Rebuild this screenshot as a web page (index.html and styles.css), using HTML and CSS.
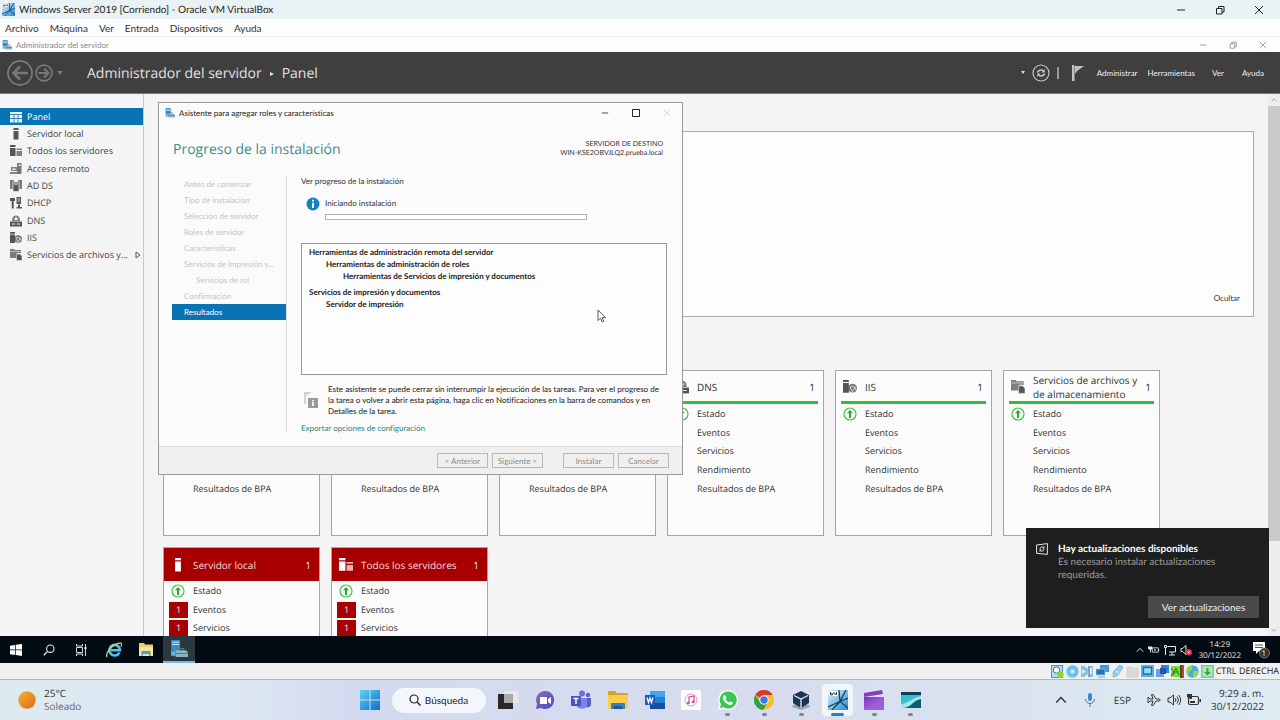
FILE: index.html
```html
<!DOCTYPE html>
<html lang="es">
<head>
<meta charset="utf-8">
<meta name="viewport" content="width=device-width, initial-scale=1">
<title>Windows Server 2019 [Corriendo] - Oracle VM VirtualBox</title>
<link rel="stylesheet" href="styles.css">
</head>
<body>
<svg class="defs" aria-hidden="true">
  <defs>
    <linearGradient id="g-win" x1="0" y1="0" x2="1" y2="1"><stop offset="0" stop-color="#5fd0f2"/><stop offset="1" stop-color="#0a6fd0"/></linearGradient>
    <linearGradient id="g-sun" x1="0" y1="0" x2="1" y2="1"><stop offset="0" stop-color="#f3b52c"/><stop offset="1" stop-color="#e2661c"/></linearGradient>
    <linearGradient id="g-chat" x1="0" y1="0" x2="1" y2="1"><stop offset="0" stop-color="#8a6bb5"/><stop offset="1" stop-color="#5046c8"/></linearGradient>
    <linearGradient id="g-clip" x1="0" y1="0" x2="1" y2="1"><stop offset="0" stop-color="#7a35b5"/><stop offset="1" stop-color="#c07af5"/></linearGradient>
    <linearGradient id="g-vm" x1="0" y1="0" x2="1" y2="1"><stop offset="0" stop-color="#e4f4fb"/><stop offset="1" stop-color="#1f8bdc"/></linearGradient>
  </defs>
  <symbol id="i-vm" viewBox="0 0 20 20"><rect width="20" height="20" fill="url(#g-vm)"/><path d="M0 17L12 11.500 20 8M4 20L12 11.500 18 0M11 0l1 11.500L20 18" stroke="#1d3f55" stroke-width="1.300" fill="none"/><rect x="1" y="1" width="9" height="5" fill="#fff"/><path d="M2.500 2v3h2V3.500h-2M6 2v2h2.500M8.500 2v3" stroke="#222" stroke-width=".8" fill="none"/></symbol>
  <symbol id="i-srvmgr" viewBox="0 0 16 16"><path d="M1 0h8v10H1z" fill="#2f8fc4"/><path d="M2 2h6M2 4h6" stroke="#d8f0fb"/><path d="M1 10h4v4H1z" fill="#65b5dc"/><path d="M5 9h9l2 2v4H5z" fill="#8fb3c6"/><path d="M7 9V7.500h5V9M5 12h11" stroke="#4b7890" fill="none"/></symbol>
  <symbol id="i-min" viewBox="0 0 10 10"><path d="M1 5h8" stroke="currentColor"/></symbol>
  <symbol id="i-max" viewBox="0 0 10 10"><path d="M1.500 1.500h7v7h-7z" fill="none" stroke="currentColor"/></symbol>
  <symbol id="i-restore" viewBox="0 0 10 10"><path d="M1.500 3.500h5.500v5.500H1.500zM3.500 3.500V1.500h5.500v5.500H7" fill="none" stroke="currentColor" stroke-linejoin="round"/></symbol>
  <symbol id="i-close" viewBox="0 0 10 10"><path d="M1 1l8 8M9 1L1 9" stroke="currentColor"/></symbol>
  <symbol id="i-up" viewBox="0 0 10 10"><path d="M1 7l4-4 4 4" fill="none" stroke="currentColor" stroke-width="1.200"/></symbol>
  <symbol id="i-down" viewBox="0 0 10 10"><path d="M1 3l4 4 4-4" fill="none" stroke="currentColor" stroke-width="1.200"/></symbol>
  <symbol id="i-left" viewBox="0 0 26 26"><circle cx="13" cy="13" r="12" fill="none" stroke="currentColor" stroke-width="1.800"/><path d="M21 13H7M13 6.500L6.500 13l6.500 6.500" fill="none" stroke="currentColor" stroke-width="2.600"/></symbol>
  <symbol id="i-right" viewBox="0 0 26 26"><circle cx="13" cy="13" r="11.500" fill="none" stroke="currentColor" stroke-width="2.500"/><path d="M5 13h14M13 6.500l6.500 6.500-6.500 6.500" fill="none" stroke="currentColor" stroke-width="3.200"/></symbol>
  <symbol id="i-refresh" viewBox="0 0 18 18"><circle cx="9" cy="9" r="8" fill="none" stroke="currentColor" stroke-width="1.200"/><path d="M5.500 8.500a3.500 3 0 0 1 6-1.500M12.500 9.500a3.500 3 0 0 1-6 1.500" fill="none" stroke="currentColor" stroke-width="1.600"/><path d="M12.800 5v3.500H9.500zM5.200 13V9.500h3.300z" fill="currentColor"/></symbol>
  <symbol id="i-flag" viewBox="0 0 12 16"><path d="M0 0h2.500v16H0zM3 1h9L5 6l-2 3z" fill="currentColor"/></symbol>
  <symbol id="i-panel" viewBox="0 0 12 12"><path d="M0 1h12v10.500H0z" fill="#e9f6fd"/><path d="M0 3.500h12M4 3.500v8M8 3.500v8M0 7.500h12" stroke="#0a73b4" stroke-width=".8"/></symbol>
  <symbol id="i-server" viewBox="0 0 12 12"><path d="M3.500 0h5v2h-5zM3.500 3h5v8.500h-5z" fill="currentColor"/></symbol>
  <symbol id="i-servers" viewBox="0 0 12 12"><path d="M0 0h5.500v2H0zM0 3h5.500v8H0z" fill="currentColor"/><path d="M6.500 3.500H12V5H6.500zM6.500 6H12v5H6.500z" fill="currentColor" opacity=".72"/></symbol>
  <symbol id="i-remote" viewBox="0 0 12 12"><path d="M7 0h4.500v11H7z" fill="currentColor" opacity=".8"/><path d="M1 4h6v4H1zM0 9h7v2H0z" fill="currentColor" opacity=".7"/><path d="M2.500 5.500h3v1.500h-3zM8.500 1.500h2v1.500h-2z" fill="#f4f4f4"/></symbol>
  <symbol id="i-adds" viewBox="0 0 12 12"><path d="M0 0h4v9H0zM8 0h4v9H8z" fill="currentColor" opacity=".75"/><path d="M3 2h6v9.500H3z" fill="currentColor" stroke="#f4f4f4" stroke-width=".7"/><path d="M4 4h4" stroke="#f4f4f4"/></symbol>
  <symbol id="i-dhcp" viewBox="0 0 12 12"><path d="M0 1h5v3H3.700v7.500H1.700V4H0zM6.500 0H11v7H6.500zM8 7.500h2V10h2v1.500H6.500V10H8z" fill="currentColor"/><path d="M7.500 2h2.500M7.500 4h2.500" stroke="#f4f4f4" stroke-width=".8"/></symbol>
  <symbol id="i-dns" viewBox="0 0 12 12"><path d="M2 5a4 4.500 0 1 1 8 0v1H2z" fill="currentColor" opacity=".75"/><circle cx="6" cy="3.700" r="1.500" fill="#f4f4f4"/><path d="M0 6.500h12v5H0z" fill="currentColor"/><path d="M2 9h3M7 9h3" stroke="#f4f4f4"/></symbol>
  <symbol id="i-iis" viewBox="0 0 12 12"><path d="M0 0h5v1.800H0zM0 2.500h5V11H0z" fill="currentColor"/><circle cx="8.200" cy="7" r="3.800" fill="currentColor" opacity=".8"/><path d="M6 6l2-1 2 2-2 3-1-2zM10 5.500l1 3" stroke="#f4f4f4" stroke-width=".7" fill="none"/></symbol>
  <symbol id="i-files" viewBox="0 0 12 12"><path d="M0 0h4l1 1h6v3H7v5H0z" fill="currentColor" opacity=".75"/><path d="M0 2.500h11" stroke="#f4f4f4" stroke-width=".5"/><path d="M6.500 5h3.500l2 2v4.500H6.500z" fill="currentColor" stroke="#f4f4f4" stroke-width=".5"/></symbol>
  <symbol id="i-ok" viewBox="0 0 14 14"><circle cx="7" cy="7" r="6" fill="none" stroke="#3fc53f" stroke-width="1.200"/><path d="M7 3l3 3.300H8V11H6V6.300H4z" fill="#2fa82f"/></symbol>
  <symbol id="i-info" viewBox="0 0 14 14"><circle cx="7" cy="7" r="6.500" fill="#1580c2"/><path d="M6 5.700h2V11H6zM6 2.800h2v1.800H6z" fill="#fff"/></symbol>
  <symbol id="i-task" viewBox="0 0 16 18"><path d="M1 1h8L3 5v8H1z" fill="#d2d2d2"/><path d="M5 7h10v10H5z" fill="#9a9a9a"/><path d="M9 11h2v4H9zM9 9h2v1.200H9z" fill="#f2f2f2"/></symbol>
  <symbol id="i-cursor" viewBox="0 0 9 14"><path d="M1 1v10.500L3.500 9.200 5.200 13l1.600-.7L5.200 8.700H8.500z" fill="#fff" stroke="#444" stroke-width=".9"/></symbol>
  <symbol id="i-update" viewBox="0 0 12 12"><path d="M.6 2L11.400.6v10.800L.6 10.300z" fill="none" stroke="#e5e5e5"/><path d="M4 6a2.200 2.200 0 0 1 3.600-1.700M8 6a2.200 2.200 0 0 1-3.600 1.700" fill="none" stroke="#e5e5e5"/><path d="M8.500 3v2.500H6zM3.500 9V6.500H6z" fill="#e5e5e5"/></symbol>
  <symbol id="i-win10" viewBox="0 0 12 12"><path d="M0 1.700l5.300-.8v4.700H0zM6 .8L12 0v5.600H6zM0 6.300h5.300V11L0 10.300zM6 6.300h6V12l-6-.9z" fill="#fff"/></symbol>
  <symbol id="i-search" viewBox="0 0 12 12"><circle cx="7.300" cy="4.700" r="3.700" fill="none" stroke="currentColor" stroke-width="1.100"/><path d="M4.600 7.400L.8 11.200" stroke="currentColor" stroke-width="1.300"/></symbol>
  <symbol id="i-search2" viewBox="0 0 12 12"><circle cx="5" cy="5" r="4" fill="none" stroke="currentColor" stroke-width="1.200"/><path d="M8 8l3.500 3.500" stroke="currentColor" stroke-width="1.400"/></symbol>
  <symbol id="i-taskview" viewBox="0 0 12 12"><path d="M1.500 3.500h6v5h-6zM1.500 0v2h6V0M1.500 12v-2h6v2M10.500 0v12" fill="none" stroke="#d8d8d8"/><path d="M9.500 3h2v2h-2z" fill="#fff"/></symbol>
  <symbol id="i-ie" viewBox="0 0 16 16"><path d="M13.500 10.500A5.300 5.300 0 1 1 14 8.300H5" fill="none" stroke="#4cc3f0" stroke-width="2.600"/><path d="M1 15C-1 11 7 1 15 1.200c1.500.6.500 2.300 0 3.300" fill="none" stroke="#e6d54b" stroke-width="1.300"/></symbol>
  <symbol id="i-folder10" viewBox="0 0 16 14"><path d="M1 0h5l1 1.500h8V13H1z" fill="#e9cc6e"/><path d="M1 4h14v9H1z" fill="#f8e59a"/><path d="M3.500 8h9v5H11v-2H5v2H3.500z" fill="#3ba7cf"/></symbol>
  <symbol id="i-battery" viewBox="0 0 14 12"><path d="M5 3.500h7v5H5zM12.500 5v2" fill="none" stroke="currentColor"/><path d="M0 2h5v2.500L3.500 6v3h-1V6L0 4.500z" fill="currentColor"/><path d="M7 5h2v2H7z" fill="currentColor"/></symbol>
  <symbol id="i-net" viewBox="0 0 12 12"><path d="M3.500 2.500h8v5.500H5M8 8v3M5 11h6M.5 1.500h2v2h-2zM1.500 4v7" fill="none" stroke="currentColor"/></symbol>
  <symbol id="i-mute" viewBox="0 0 12 12"><path d="M1 4.500h1.500L6 1.500v9L2.500 7.500H1z" fill="none" stroke="currentColor"/><circle cx="8.700" cy="8.300" r="3.200" fill="#d9304a"/><path d="M7.500 7.100l2.400 2.400M9.900 7.100L7.500 9.500" stroke="#fff" stroke-width=".8"/></symbol>
  <symbol id="i-note" viewBox="0 0 18 18"><path d="M1 1h12v9H7l-3 3v-3H1z" fill="#fff"/><path d="M3 4h8M3 6.500h8" stroke="#222" stroke-width=".8"/><circle cx="12.500" cy="12" r="5" fill="#333" stroke="#999" stroke-width=".7"/></symbol>
  <symbol id="i-s1" viewBox="0 0 13 13"><rect x=".5" y=".5" width="11" height="12" fill="#b9dcef" stroke="#4a97cf"/><circle cx="5.500" cy="5" r="3.200" fill="#fff" stroke="#2a70b0"/><circle cx="9.500" cy="9.700" r="3.200" fill="#8bd336"/></symbol>
  <symbol id="i-s2" viewBox="0 0 13 13"><circle cx="6.500" cy="6.500" r="6.200" fill="#6bc2ea"/><circle cx="6.500" cy="6.500" r="3" fill="#a9e2f7" stroke="#4aa6d8" stroke-width=".6"/><circle cx="6.500" cy="6.500" r="1.100" fill="#fff"/></symbol>
  <symbol id="i-s3" viewBox="0 0 13 13"><path d="M0 1h3l4 3V1h5v11H7V9l-4 3H0z" fill="#91bcda"/><path d="M9 3h2v6H9zM1 4l4 2.500L1 9z" fill="#d9eef8"/><path d="M8 1v11" stroke="#7b8d98"/></symbol>
  <symbol id="i-s4" viewBox="0 0 13 13"><path d="M4 0h9v7H4z" fill="#4698d5"/><path d="M0 4h9v6H0z" fill="#2273b8" stroke="#9dd1f0" stroke-width=".7"/><path d="M2 12h7" stroke="#6eacd2"/></symbol>
  <symbol id="i-s5" viewBox="0 0 13 13"><path d="M9 0l3 2-5 8-4 2-2-1 2-5z" fill="#93cdec" stroke="#5a9cc8" stroke-width=".7"/><path d="M5 6l3 2M2 9l-2 4" stroke="#eaf7fd"/></symbol>
  <symbol id="i-s6" viewBox="0 0 13 13"><path d="M1 2h4l1 1h6v9H1z" fill="#dadada" stroke="#c5c5c5" stroke-width=".6"/></symbol>
  <symbol id="i-s7" viewBox="0 0 13 13"><path d="M0 0h13v12H0z" fill="#5db2e8"/><path d="M2.500 2.500h8v6.500h-8z" fill="#8fe2fb" stroke="#1f6db3" stroke-width="1.300"/></symbol>
  <symbol id="i-s8" viewBox="0 0 13 13"><path d="M5 0h8v8H5z" fill="#3a80d4"/><path d="M0 4h8v8H0z" fill="#6aa4e8"/><path d="M4 3h6v6H4z" fill="#2456b0"/></symbol>
  <symbol id="i-s9" viewBox="0 0 13 13"><path d="M0 1h9v11H0z" fill="#7fdb3f"/><path d="M2 10l3-7 3 7M3 7h4M0 3l3 4-3 4" fill="none" stroke="#2c7a18" stroke-width="1"/><path d="M9 0h2v13H9z" fill="#2e5a1c"/><path d="M11 0h2v13h-2z" fill="#c64428"/></symbol>
  <symbol id="i-s10" viewBox="0 0 13 13"><circle cx="6.500" cy="6.500" r="6.200" fill="#49a9e0"/><path d="M1 3c3-4 6-2 5 1s-3 1-3 4-2 1-2 0zM7 6h5c1 3-2 6-4 6s0-3-1-6z" fill="#94dd3a"/></symbol>
  <symbol id="i-s11" viewBox="0 0 13 13"><path d="M0 0h13v13H0z" fill="#63c8da"/><path d="M1.500 1.500h10v10h-10z" fill="#b6eb93"/><path d="M5.500 3h2v4H10l-3.500 3.500L3 7h2.500z" fill="#33a44b"/></symbol>
  <symbol id="i-sun" viewBox="0 0 18 18"><circle cx="9" cy="9" r="8.700" fill="url(#g-sun)"/></symbol>
  <symbol id="i-win11" viewBox="0 0 20 20"><path d="M0 0h9.500v9.500H0zM10.500 0H20v9.500h-9.500zM0 10.500h9.500V20H0zM10.500 10.500H20V20h-9.500z" fill="url(#g-win)"/></symbol>
  <symbol id="i-desk" viewBox="0 0 20 20"><path d="M0 4h15v15H0z" fill="#292929"/><path d="M6 1h14v12H6z" fill="#e8e9e7"/><path d="M6 4h9v9H6z" fill="#aaa"/></symbol>
  <symbol id="i-chat" viewBox="0 0 20 20"><path d="M10 1a9 9 0 1 1-4 17l-5 1 1-5A9 9 0 0 1 10 1z" fill="url(#g-chat)"/><path d="M5 7h7v7H5zM13 9l3-2v7l-3-2z" fill="#fff"/></symbol>
  <symbol id="i-teams" viewBox="0 0 20 20"><circle cx="11" cy="3.500" r="3" fill="#6b6fd6"/><circle cx="17" cy="5" r="2.200" fill="#5b5fc7"/><path d="M14 8h6v6c0 3-3 4-5 3z" fill="#5b5fc7"/><path d="M5 8h11v7c0 5-10 5-11 0z" fill="#7b83eb"/><path d="M0 6h10v10H0z" fill="#4b53bc"/><path d="M2.500 8.500h5M5 8.500v5.500" stroke="#fff" stroke-width="1.400"/></symbol>
  <symbol id="i-folder11" viewBox="0 0 20 20"><path d="M0 2q0-1 1-1h6l2 2h10q1 0 1 1v5H0z" fill="#dba127"/><path d="M0 5h20v13q0 1-1 1H1q-1 0-1-1z" fill="#f7cf4c"/><path d="M4 13h12q1 0 1 1v5H3v-5q0-1 1-1z" fill="#2b82cb"/><path d="M6 16h8v3H6z" fill="#17579c"/></symbol>
  <symbol id="i-word" viewBox="0 0 20 20"><path d="M5 1h15v6H5z" fill="#41a5ee"/><path d="M5 7h15v6H5z" fill="#2b7cd3"/><path d="M5 13h15v6H5z" fill="#164fa0"/><path d="M0 5h10v10H0z" fill="#185abd"/><path d="M2 7.500l1.500 5L5 8l1.500 4.500L8 7.500" fill="none" stroke="#fff" stroke-width="1.300"/></symbol>
  <symbol id="i-itunes" viewBox="0 0 20 20"><path d="M0 0h20v20H0z" fill="#fdfdfd"/><circle cx="10" cy="10" r="6" fill="none" stroke="#b98be0" stroke-width=".8"/><path d="M8 13V7l5-1v6" fill="none" stroke="#e2447d" stroke-width="1.200"/><ellipse cx="7.200" cy="13" rx="1.500" ry="1.200" fill="#6b6fe8"/><ellipse cx="12.200" cy="12" rx="1.500" ry="1.200" fill="#e2447d"/></symbol>
  <symbol id="i-whats" viewBox="0 0 20 20"><path d="M10 0a10 10 0 1 1-4.700 18.800L0 20l1.300-5A10 10 0 0 1 10 0z" fill="#f5faf5"/><path d="M10 1.500a8.500 8.500 0 1 1-4.300 15.700L2 18l1-3.500A8.500 8.500 0 0 1 10 1.500z" fill="#38c553"/><path d="M7 5l1.700 2.700L7.500 9c.8 1.700 2 2.800 3.700 3.500l1.300-1.200L15 13c-.5 2-2.500 2.300-4 1.700-3-1-5.500-3.500-6-6C4.700 7 5.500 5 7 5z" fill="#fff"/></symbol>
  <symbol id="i-chrome" viewBox="0 0 20 20"><circle cx="10" cy="10" r="10" fill="#f6c12c"/><path d="M10 10L1.300 5A10 10 0 0 1 18.700 5H10z" fill="#d93a30"/><path d="M1.300 5A10 10 0 0 0 9 20l5-8-4-2-4 2z" fill="#2da04e"/><circle cx="10" cy="10" r="4.700" fill="#fff"/><circle cx="10" cy="10" r="3.700" fill="#3b78e0"/></symbol>
  <symbol id="i-vbox" viewBox="0 0 20 20"><path d="M2 15l8-2 8 2 1 2-9 3-9-3z" fill="#94a7ba"/><path d="M10 1l8 4v8l-8 5-8-5V5z" fill="#1c3550"/><path d="M3 5.500L10 9l7-3.500M10 9v9" stroke="#e3ebf1" stroke-width="1.300" fill="none"/></symbol>
  <symbol id="i-clip" viewBox="0 0 20 20"><path d="M0 3l18-3 1 4L0 7z" fill="#8a3bbf"/><path d="M0 7h20v12q0 1-1 1H1q-1 0-1-1z" fill="url(#g-clip)"/><path d="M2 20Q13 18 20 8v12z" fill="#8d55de" opacity=".6"/></symbol>
  <symbol id="i-wave" viewBox="0 0 20 20"><path d="M0 2h20v16H0z" fill="#0f5d75"/><path d="M0 2h20v3H0z" fill="#0b3d55"/><path d="M0 5h20v3C12 8 10 15 0 17z" fill="#34bfcf"/><path d="M0 14C9 13 10 8 20 6v3C12 10 11 17 3 18H0z" fill="#a5e6e6"/></symbol>
  <symbol id="i-mic" viewBox="0 0 12 14"><rect x="4" y="0" width="4" height="8" rx="2" fill="#3d8bc9"/><path d="M1.500 6c0 6 9 6 9 0M6 10.500V14" fill="none" stroke="#52779a"/></symbol>
  <symbol id="i-plane" viewBox="0 0 14 14"><path d="M1 4l2 2h3L4.500 1.500H6L9 6h3c1.500 0 1.500 2 0 2H9l-3 4.500H4.500L6 8H3l-2 2V4z" fill="none" stroke="currentColor" stroke-linejoin="round"/></symbol>
  <symbol id="i-vol" viewBox="0 0 14 14"><path d="M1 5h2l3.500-3v10L3 9H1zM8 5q2 2 0 4M10 3.500q3 3.500 0 7M11.700 2q4 5 0 10" fill="none" stroke="currentColor"/></symbol>
  <symbol id="i-bat11" viewBox="0 0 14 14"><rect x="1.500" y="3.500" width="10" height="8" rx="1.500" fill="none" stroke="currentColor" stroke-width="1.200"/><path d="M3 8h5v2H3zM12.500 6H14v3h-1.500zM0 1h5v5H3L0 4z" fill="currentColor"/></symbol>
</svg>

<header class="host-title">
  <svg class="ic13"><use href="#i-vm"/></svg>
  <h1>Windows Server 2019 [Corriendo] - Oracle VM VirtualBox</h1>
  <div class="host-controls">
    <button type="button" aria-label="Minimizar"><svg class="ic10"><use href="#i-min"/></svg></button>
    <button type="button" aria-label="Restaurar"><svg class="ic10"><use href="#i-restore"/></svg></button>
    <button type="button" aria-label="Cerrar"><svg class="ic10"><use href="#i-close"/></svg></button>
  </div>
</header>
<nav class="host-menu" aria-label="Menú de la máquina">
  <button type="button">Archivo</button><button type="button">Máquina</button><button type="button">Ver</button><button type="button">Entrada</button><button type="button">Dispositivos</button><button type="button">Ayuda</button>
</nav>

<div class="app-title">
  <svg class="ic10"><use href="#i-srvmgr"/></svg>
  <span>Administrador del servidor</span>
  <div class="app-controls">
    <button type="button" aria-label="Minimizar"><svg class="ic8"><use href="#i-min"/></svg></button>
    <button type="button" aria-label="Restaurar"><svg class="ic8"><use href="#i-restore"/></svg></button>
    <button type="button" aria-label="Cerrar"><svg class="ic8"><use href="#i-close"/></svg></button>
  </div>
</div>

<div class="app-head">
  <div class="history">
    <button type="button" aria-label="Atrás"><svg class="ic26"><use href="#i-left"/></svg></button>
    <button type="button" aria-label="Adelante"><svg class="ic18"><use href="#i-right"/></svg></button>
    <button type="button" aria-label="Historial"><i class="caret"></i></button>
  </div>
  <div class="crumbs"><span>Administrador del servidor</span><i class="crumb-arrow"></i><span>Panel</span></div>
  <div class="head-tools">
    <button type="button" aria-label="Más"><i class="caret caret-light"></i></button>
    <button type="button" aria-label="Actualizar"><svg class="ic18"><use href="#i-refresh"/></svg></button>
    <i class="bar"></i>
    <button type="button" aria-label="Notificaciones"><svg class="flag"><use href="#i-flag"/></svg></button>
  </div>
  <nav class="head-menu" aria-label="Menú del administrador">
    <button type="button">Administrar</button><button type="button">Herramientas</button><button type="button">Ver</button><button type="button">Ayuda</button>
  </nav>
</div>

<div class="workspace">
  <nav class="side" aria-label="Roles">
    <ul>
      <li class="on"><a href="#"><svg class="ic12"><use href="#i-panel"/></svg>Panel</a></li>
      <li><a href="#"><svg class="ic12"><use href="#i-server"/></svg>Servidor local</a></li>
      <li><a href="#"><svg class="ic12"><use href="#i-servers"/></svg>Todos los servidores</a></li>
      <li><a href="#"><svg class="ic12"><use href="#i-remote"/></svg>Acceso remoto</a></li>
      <li><a href="#"><svg class="ic12"><use href="#i-adds"/></svg>AD DS</a></li>
      <li><a href="#"><svg class="ic12"><use href="#i-dhcp"/></svg>DHCP</a></li>
      <li><a href="#"><svg class="ic12"><use href="#i-dns"/></svg>DNS</a></li>
      <li><a href="#"><svg class="ic12"><use href="#i-iis"/></svg>IIS</a></li>
      <li><a href="#"><svg class="ic12"><use href="#i-files"/></svg>Servicios de archivos y...<svg class="more" viewBox="0 0 6 8"><path d="M1 1l4 3-4 3z" fill="none" stroke="#555"/></svg></a></li>
    </ul>
  </nav>

  <main class="board">
    <section class="welcome"><button type="button">Ocultar</button></section>
    <div class="cards">
      <article class="card"><ul><li class="last">Resultados de BPA</li></ul></article>
      <article class="card"><ul><li class="last">Resultados de BPA</li></ul></article>
      <article class="card"><ul><li class="last">Resultados de BPA</li></ul></article>
      <article class="card">
        <h2><svg class="ic14"><use href="#i-dns"/></svg><span>DNS</span><b>1</b></h2>
        <ul><li><svg class="ic14"><use href="#i-ok"/></svg>Estado</li><li>Eventos</li><li>Servicios</li><li>Rendimiento</li><li>Resultados de BPA</li></ul>
      </article>
      <article class="card">
        <h2><svg class="ic14"><use href="#i-iis"/></svg><span>IIS</span><b>1</b></h2>
        <ul><li><svg class="ic14"><use href="#i-ok"/></svg>Estado</li><li>Eventos</li><li>Servicios</li><li>Rendimiento</li><li>Resultados de BPA</li></ul>
      </article>
      <article class="card">
        <h2><svg class="ic14"><use href="#i-files"/></svg><span>Servicios de archivos y de almacenamiento</span><b>1</b></h2>
        <ul><li><svg class="ic14"><use href="#i-ok"/></svg>Estado</li><li>Eventos</li><li>Servicios</li><li>Rendimiento</li><li>Resultados de BPA</li></ul>
      </article>
      <article class="card alert">
        <h2><svg class="ic14"><use href="#i-server"/></svg><span>Servidor local</span><b>1</b></h2>
        <ul><li><svg class="ic14"><use href="#i-ok"/></svg>Estado</li><li><em>1</em>Eventos</li><li><em>1</em>Servicios</li></ul>
      </article>
      <article class="card alert">
        <h2><svg class="ic14"><use href="#i-servers"/></svg><span>Todos los servidores</span><b>1</b></h2>
        <ul><li><svg class="ic14"><use href="#i-ok"/></svg>Estado</li><li><em>1</em>Eventos</li><li><em>1</em>Servicios</li></ul>
      </article>
    </div>
  </main>

  <div class="scroll" aria-hidden="true">
    <svg class="ic6"><use href="#i-up"/></svg>
    <div class="track"><div class="thumb"></div></div>
    <svg class="ic6"><use href="#i-down"/></svg>
  </div>

  <section class="wizard" role="dialog" aria-labelledby="wiz-title">
    <header class="wiz-title">
      <svg class="ic10"><use href="#i-srvmgr"/></svg>
      <h2 id="wiz-title">Asistente para agregar roles y características</h2>
      <div class="wiz-controls">
        <button type="button" aria-label="Minimizar"><svg class="ic8"><use href="#i-min"/></svg></button>
        <button type="button" aria-label="Maximizar"><svg class="ic10"><use href="#i-max"/></svg></button>
        <button type="button" aria-label="Cerrar" disabled><svg class="ic8"><use href="#i-close"/></svg></button>
      </div>
    </header>
    <div class="wiz-head">
      <h3>Progreso de la instalación</h3>
      <p>SERVIDOR DE DESTINO<br>WIN-KSE2OBVJLQ2.prueba.local</p>
    </div>
    <div class="wiz-body">
      <ol class="steps">
        <li>Antes de comenzar</li><li>Tipo de instalación</li><li>Selección de servidor</li><li>Roles de servidor</li><li>Características</li><li>Servicios de impresión y...</li><li class="sub">Servicios de rol</li><li>Confirmación</li><li class="on">Resultados</li>
      </ol>
      <div class="wiz-main">
        <p class="intro">Ver progreso de la instalación</p>
        <div class="status">
          <svg class="ic14"><use href="#i-info"/></svg>
          <div><label for="prog">Iniciando instalación</label><progress id="prog" max="100" value="0"></progress></div>
        </div>
        <ul class="tree">
          <li>Herramientas de administración remota del servidor
            <ul><li>Herramientas de administración de roles
              <ul><li>Herramientas de Servicios de impresión y documentos</li></ul></li></ul></li>
          <li>Servicios de impresión y documentos
            <ul><li>Servidor de impresión</li></ul></li>
        </ul>
        <div class="hint">
          <svg class="task"><use href="#i-task"/></svg>
          <p>Este asistente se puede cerrar sin interrumpir la ejecución de las tareas. Para ver el progreso de la tarea o volver a abrir esta página, haga clic en Notificaciones en la barra de comandos y en Detalles de la tarea.</p>
        </div>
        <a class="export" href="#">Exportar opciones de configuración</a>
      </div>
    </div>
    <footer class="wiz-foot">
      <button type="button" disabled>&lt; Anterior</button>
      <button type="button" disabled>Siguiente &gt;</button>
      <button type="button" class="apart" disabled>Instalar</button>
      <button type="button" disabled>Cancelar</button>
    </footer>
    <svg class="cursor" aria-hidden="true"><use href="#i-cursor"/></svg>
  </section>

  <aside class="toast" role="status">
    <svg class="ic12"><use href="#i-update"/></svg>
    <div>
      <h2>Hay actualizaciones disponibles</h2>
      <p>Es necesario instalar actualizaciones requeridas.</p>
    </div>
    <button type="button">Ver actualizaciones</button>
  </aside>
</div>

<div class="guest-bar">
  <div class="guest-apps">
    <button type="button" aria-label="Inicio"><svg class="ic12"><use href="#i-win10"/></svg></button>
    <button type="button" aria-label="Buscar"><svg class="ic12"><use href="#i-search"/></svg></button>
    <button type="button" aria-label="Vista de tareas"><svg class="ic12"><use href="#i-taskview"/></svg></button>
    <button type="button" aria-label="Internet Explorer"><svg class="ic16"><use href="#i-ie"/></svg></button>
    <button type="button" aria-label="Explorador"><svg class="ic16"><use href="#i-folder10"/></svg></button>
    <button type="button" class="on" aria-label="Administrador del servidor"><svg class="ic18"><use href="#i-srvmgr"/></svg></button>
  </div>
  <div class="guest-tray">
    <svg class="ic8"><use href="#i-up"/></svg>
    <svg class="ic12"><use href="#i-battery"/></svg>
    <svg class="ic12"><use href="#i-net"/></svg>
    <svg class="ic12"><use href="#i-mute"/></svg>
    <time datetime="2022-12-30T14:29">14:29<br>30/12/2022</time>
    <span class="note"><svg class="ic18"><use href="#i-note"/></svg><span>1</span></span>
  </div>
</div>

<div class="vm-status">
  <svg class="ic13"><use href="#i-s1"/></svg><svg class="ic13"><use href="#i-s2"/></svg><svg class="ic13"><use href="#i-s3"/></svg><svg class="ic13"><use href="#i-s4"/></svg><svg class="ic13"><use href="#i-s5"/></svg><svg class="ic13"><use href="#i-s6"/></svg><svg class="ic13"><use href="#i-s7"/></svg><svg class="ic13"><use href="#i-s8"/></svg><svg class="ic13"><use href="#i-s9"/></svg><svg class="ic13"><use href="#i-s10"/></svg><svg class="ic13"><use href="#i-s11"/></svg>
  <span>CTRL DERECHA</span>
</div>

<footer class="host-bar">
  <div class="weather"><svg class="ic18"><use href="#i-sun"/></svg><p>25°C<br><span>Soleado</span></p></div>
  <div class="dock">
    <button type="button" aria-label="Inicio"><svg class="ic20"><use href="#i-win11"/></svg></button>
    <button type="button" class="search"><svg class="ic12"><use href="#i-search2"/></svg>Búsqueda</button>
    <div class="dock-apps">
      <button type="button" aria-label="Vista de tareas"><svg class="ic20"><use href="#i-desk"/></svg></button>
      <button type="button" aria-label="Chat"><svg class="ic20"><use href="#i-chat"/></svg></button>
      <button type="button" aria-label="Teams"><svg class="ic20"><use href="#i-teams"/></svg></button>
      <button type="button" aria-label="Explorador"><svg class="ic20"><use href="#i-folder11"/></svg></button>
      <button type="button" aria-label="Word"><svg class="ic20"><use href="#i-word"/></svg></button>
      <button type="button" aria-label="iTunes"><svg class="ic20"><use href="#i-itunes"/></svg></button>
      <button type="button" class="open" aria-label="WhatsApp"><svg class="ic20"><use href="#i-whats"/></svg></button>
      <button type="button" class="open" aria-label="Chrome"><svg class="ic20"><use href="#i-chrome"/></svg></button>
      <button type="button" class="open" aria-label="VirtualBox"><svg class="ic20"><use href="#i-vbox"/></svg></button>
      <button type="button" class="open current" aria-label="Máquina virtual"><svg class="ic20"><use href="#i-vm"/></svg></button>
      <button type="button" class="open" aria-label="Clipchamp"><svg class="ic20"><use href="#i-clip"/></svg></button>
      <button type="button" class="open" aria-label="Grabadora"><svg class="ic20"><use href="#i-wave"/></svg></button>
    </div>
  </div>
  <div class="host-tray">
    <svg class="ic12"><use href="#i-up"/></svg>
    <svg class="mic"><use href="#i-mic"/></svg>
    <span>ESP</span>
    <div class="quick"><svg class="ic14"><use href="#i-plane"/></svg><svg class="ic14"><use href="#i-vol"/></svg><svg class="ic14"><use href="#i-bat11"/></svg></div>
    <time datetime="2022-12-30T09:29">9:29 a. m.<br>30/12/2022</time>
  </div>
</footer>
</body>
</html>
```

FILE: styles.css
```css
* { box-sizing: border-box; }
body {
  margin: 0;
  height: 100vh;
  display: flex;
  flex-direction: column;
  overflow: hidden;
  font-family: Lato, "Open Sans", sans-serif;
  font-size: 9px;
  line-height: 12px;
  font-variant-ligatures: none;
  text-rendering: geometricPrecision;
  color: #333;
  background: #f4f4f4;
}
h1, h2, h3 { margin: 0; font-weight: 400; }
p, ul, ol { margin: 0; padding: 0; }
ul, ol { list-style: none; }
a { color: inherit; text-decoration: none; }
button { font: inherit; font-variant-ligatures: none; color: inherit; background: none; border: 0; padding: 0; margin: 0; white-space: nowrap; }
svg { display: block; flex: none; }
.defs { position: absolute; width: 0; height: 0; }
.ic6 { width: 6px; height: 6px; }
.ic8 { width: 8px; height: 8px; }
.ic10 { width: 10px; height: 10px; }
.ic12 { width: 12px; height: 12px; }
.ic13 { width: 13px; height: 13px; }
.ic14 { width: 14px; height: 14px; }
.ic16 { width: 16px; height: 16px; }
.ic18 { width: 18px; height: 18px; }
.ic20 { width: 20px; height: 20px; }
.ic26 { width: 26px; height: 26px; }
.crumbs, .side, .cards, .wiz-head h3, .weather, .guest-tray, .vm-status, .host-tray { font-family: "Open Sans", "Noto Sans", sans-serif; }

/* Host window */
.host-title { flex: none; height: 19px; padding: 0 16px 0 2px; display: flex; align-items: center; gap: 4px; background: #e9f2f5; color: #222; }
.host-title h1 { font-size: 10px; line-height: 16px; }
.host-controls { margin-left: auto; display: flex; gap: 29px; }
.host-menu { flex: none; height: 18px; padding: 0 5px; display: flex; align-items: center; gap: 11px; background: #fdfdfd; border-bottom: 1px solid #eee; font-size: 10px; }

/* Server manager */
.app-title { flex: none; height: 15px; padding: 0 13px 0 2px; display: flex; align-items: center; gap: 4px; background: #fdfdfd; color: #8b8b8b; font-size: 8px; }
.app-controls { margin-left: auto; display: flex; gap: 22px; }
.app-head { flex: none; height: 42px; padding: 0 16px 0 7px; display: flex; align-items: center; background: #3f3f3f; color: #e8e8e8; border-bottom: 1px solid #777; }
.history { display: flex; align-items: center; gap: 2px; width: 80px; color: #777; }
.history button:last-child { padding-left: 2px; }
.caret { display: block; border: 3px solid transparent; border-top: 4px solid #777; border-bottom: 0; }
.caret-light { border-width: 3px 2px 0; border-top-color: #ddd; }
.crumbs { display: flex; align-items: center; gap: 8px; padding-top: 2px; font-size: 14px; line-height: 20px; color: #e2e2e2; }
.crumb-arrow { border: 2px solid transparent; border-left: 4px solid #e2e2e2; border-right: 0; }
.head-tools { margin-left: auto; display: flex; align-items: center; gap: 7px; color: #c4c4c4; }
.bar { width: 2px; height: 12px; background: #999; }
.flag { width: 12px; height: 16px; margin-left: 6px; }
.head-menu { display: flex; margin-left: 13px; font-size: 8px; color: #eee; }
.head-menu button:nth-child(2) { margin: 0 17px 0 10px; }
.head-menu button:nth-child(4) { margin-left: 18px; }

.workspace { position: relative; flex: 1; min-height: 0; display: flex; overflow: hidden; }
.side { flex: none; width: 144px; padding-top: 14px; border-right: 1px solid #c9c9c9; color: #444; }
.side ul { height: 156px; display: grid; grid-auto-rows: 1fr; }
.side a { height: 100%; display: flex; align-items: center; gap: 5px; padding: 0 2px 0 10px; white-space: nowrap; color: #444; }
.side svg { color: #555; }
.side .on a { background: #0a73b4; color: #fff; }
.side .more { width: 6px; height: 8px; margin-left: auto; }

.board { flex: 1; min-width: 0; padding: 37px 14px 0 19px; }
.welcome { height: 186px; padding: 12px 13px; display: flex; justify-content: flex-end; align-items: flex-end; background: #fdfdfd; border: 1px solid #aaa; font-size: 8px; }
.cards { margin-top: 53px; display: grid; grid-template-columns: repeat(auto-fill, 157px); gap: 11px; }
.card { height: 166px; background: #fbfbfb; border: 1px solid #a5a5a5; }
.card h2 { height: 33px; margin: 0 5px; padding: 2px 3px 0 2px; display: flex; align-items: center; border-bottom: 3px solid #35bf35; font-size: 10px; line-height: 14px; color: #333; }
.card h2 svg { margin-right: 8px; color: #555; }
.card h2 span { flex: 1; }
.card h2 b { font-weight: 400; }
.card ul { height: 93px; margin-top: 1px; display: grid; grid-template-rows: repeat(5, 1fr); }
.card li { position: relative; display: flex; align-items: center; padding-left: 29px; }
.card li svg { position: absolute; left: 7px; }
.card li.last { grid-row: 5; }
.card > ul:first-child { margin-top: 34px; }
.card em { position: absolute; left: 5px; width: 19px; height: 16px; background: #a80000; color: #eee; font-style: normal; line-height: 16px; text-align: center; }
.card.alert h2 { margin: 0; padding: 0 8px 0 7px; border: 0; background: #a80000; color: #f4dede; }
.card.alert h2 svg { color: #fff; }

.scroll { flex: none; width: 12px; padding: 3px 0; display: flex; flex-direction: column; align-items: center; gap: 3px; background: #eee; color: #888; }
.track { flex: 1; align-self: stretch; }
.thumb { height: 84%; background: #c9c9c9; }

/* Wizard window */
.wizard { position: absolute; left: 158px; top: 8px; width: 525px; background: #fbfbfb; border: 1px solid #999; font-size: 8px; }
.wiz-title { height: 19px; padding: 0 11px 0 6px; display: flex; align-items: center; gap: 4px; color: #222; }
.wiz-title h2 { font-size: 8px; }
.wiz-controls { margin-left: auto; display: flex; align-items: center; gap: 22px; }
.wiz-controls button:disabled { color: #ccc; }
.wiz-head { padding: 16px 19px 0 14px; display: flex; justify-content: space-between; }
.wiz-head h3 { font-size: 14px; line-height: 24px; color: #3f8c89; }
.wiz-head p { padding-top: 2px; font-size: 7px; line-height: 9px; text-align: right; }
.wiz-body { display: flex; padding: 14px 15px 12px 13px; }
.steps { width: 115px; height: 256px; border-right: 1px solid #ddd; color: #c4c4c4; line-height: 16px; white-space: nowrap; }
.steps li { padding-left: 12px; }
.steps .sub { padding-left: 24px; }
.steps .on { background: #0a73b4; color: #fff; }
.wiz-main { flex: 1; min-width: 0; padding-left: 14px; }
.intro { line-height: 10px; }
.status { display: flex; gap: 5px; padding: 10px 0 0 5px; }
.status svg { margin-top: 1px; }
.status label { display: block; line-height: 14px; }
.status progress { display: block; width: 262px; height: 6px; margin-top: 4px; appearance: none; border: 1px solid #b5b5b5; background: #fff; }
.status progress::-webkit-progress-bar { background: #fff; }
.tree { height: 132px; margin-top: 23px; padding: 2px 7px; border: 1px solid #999; background: #fdfdfd; font-weight: 700; color: #222; }
.tree > li + li { margin-top: 4px; }
.tree ul { padding-left: 17px; }
.hint { display: flex; gap: 9px; padding: 9px 4px 0 2px; color: #222; }
.hint p { line-height: 11px; }
.task { width: 16px; height: 18px; margin-top: 7px; }
.export { display: block; margin-top: 5px; color: #2d8580; }
.wiz-foot { height: 28px; padding: 0 13px; display: flex; align-items: center; justify-content: flex-end; gap: 4px; border-top: 1px solid #ddd; background: #efefef; }
.wiz-foot button { width: 51px; height: 15px; border: 1px solid #b8b8b8; color: #8d8d8d; line-height: 12px; }
.wiz-foot .apart { margin-left: 16px; }
.cursor { position: absolute; left: 438px; top: 206px; width: 9px; height: 14px; }

/* Update notification */
.toast { position: absolute; right: 11px; bottom: 8px; width: 243px; height: 100px; padding: 15px 10px 10px; display: grid; grid-template: 1fr auto / 12px 1fr; gap: 0 10px; background: #1e1e1e; color: #fff; font-size: 10px; line-height: 13px; }
.toast h2 { font-size: 10px; font-weight: 700; line-height: 13px; }
.toast p { color: #9c9c9c; }
.toast button { grid-column: 2; justify-self: end; width: 111px; height: 22px; background: #4a4a4a; color: #f0f0f0; }

/* Guest taskbar */
.guest-bar { flex: none; height: 27px; display: flex; justify-content: space-between; background: #030c12; color: #e8e8e8; }
.guest-apps { width: 195px; display: grid; grid-template-columns: repeat(6, 1fr); }
.guest-apps button { display: flex; align-items: center; justify-content: center; }
.guest-apps .on { background: #2c3840; border-bottom: 2px solid #76b9e0; }
.guest-tray { display: flex; align-items: center; gap: 4px; padding-right: 10px; font-size: 8px; line-height: 11px; text-align: center; }
.guest-tray time { margin: 0 7px 0 3px; }
.note { position: relative; }
.note span { position: absolute; right: 4px; bottom: 0; }

.vm-status { flex: none; height: 17px; display: flex; align-items: center; justify-content: flex-end; gap: 2px; padding-right: 1px; background: #f0f0f0; color: #222; font-size: 9px; border-bottom: 1px solid #b5b8bd; }

/* Host taskbar */
.host-bar { flex: none; height: 40px; display: grid; grid-template-columns: 1fr auto 1fr; align-items: center; background: linear-gradient(90deg, #dcebf2 0%, #dce8f2 18%, #d3daf0 28%, #d8dcee 60%, #dae6f0 85%, #dfebf3 100%); color: #333; }
.weather { display: flex; align-items: center; gap: 8px; padding-left: 18px; font-size: 10px; line-height: 13px; }
.weather span { color: #667; }
.dock { display: flex; align-items: center; gap: 12px; }
.search { width: 94px; height: 25px; display: flex; align-items: center; justify-content: center; gap: 4px; border-radius: 13px; background: #f3f7fb; font-size: 10px; color: #222; }
.dock-apps { width: 434px; margin: 0 -6px 0 -5px; display: flex; justify-content: space-between; }
.dock-apps button { position: relative; width: 31px; height: 32px; display: flex; align-items: center; justify-content: center; border-radius: 4px; }
.dock-apps .current { background: #f1f6fb; }
.dock-apps .open::after { content: ""; position: absolute; bottom: 0; left: 13px; width: 5px; height: 3px; border-radius: 2px; background: #80858c; }
.dock-apps .current::after { left: 9px; width: 13px; background: #2b7db8; }
.host-tray { display: flex; align-items: center; justify-content: flex-end; padding-right: 16px; font-size: 10px; line-height: 13px; }
.mic { width: 12px; height: 14px; margin: 0 18px 0 17px; }
.quick { display: flex; gap: 6px; margin: 0 10px 0 16px; }
.host-tray time { text-align: right; }
```
